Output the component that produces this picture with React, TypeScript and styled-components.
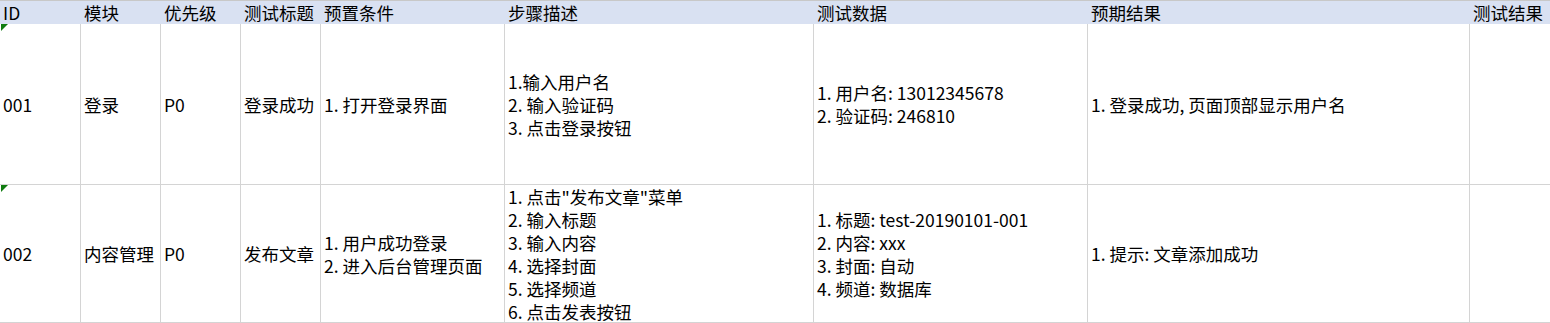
import React from 'react';
import styled, { createGlobalStyle } from 'styled-components';

const GlobalStyle = createGlobalStyle`
  body {
    margin: 0;
    background: #ffffff;
    font-family: 'Noto Sans CJK SC', 'Noto Sans', sans-serif;
    color: #000;
  }
`;

const columns = [81, 80, 80, 80, 184, 309, 274, 382, 80];

const Sheet = styled.div`
  display: grid;
  grid-template-columns: ${columns.map((w) => `${w}px`).join(' ')};
  grid-template-rows: 23px 161px 138px;
  border-top: 1px solid #c8c8c8;
  width: 1550px;
  font-size: 17.5px;
  line-height: 23px;
`;

const HeaderCell = styled.div`
  background: #d9e1f2;
  padding: 0 3px;
  white-space: nowrap;
  overflow: hidden;
  display: flex;
  align-items: center;
`;

const Cell = styled.div<{ $last?: boolean; $flag?: boolean }>`
  position: relative;
  box-sizing: border-box;
  border-bottom: 1px solid #d4d4d4;
  border-right: ${(p) => (p.$last ? 'none' : '1px solid #d4d4d4')};
  padding: 0 3px;
  display: flex;
  flex-direction: column;
  justify-content: center;
  white-space: nowrap;
  overflow: hidden;

  ${(p) =>
    p.$flag &&
    `
    &::before {
      content: '';
      position: absolute;
      top: 0;
      left: 1px;
      width: 0;
      height: 0;
      border-top: 7px solid #107c10;
      border-right: 7px solid transparent;
    }
  `}
`;

const Line = styled.span`
  display: block;
`;

const headers = ['ID', '模块', '优先级', '测试标题', '预置条件', '步骤描述', '测试数据', '预期结果', '测试结果'];

const rows: string[][][] = [
  [
    ['001'],
    ['登录'],
    ['P0'],
    ['登录成功'],
    ['1. 打开登录界面'],
    ['1.输入用户名', '2. 输入验证码', '3. 点击登录按钮'],
    ['1. 用户名: 13012345678', '2. 验证码: 246810'],
    ['1. 登录成功, 页面顶部显示用户名'],
    [],
  ],
  [
    ['002'],
    ['内容管理'],
    ['P0'],
    ['发布文章'],
    ['1. 用户成功登录', '2. 进入后台管理页面'],
    ['1. 点击"发布文章"菜单', '2. 输入标题', '3. 输入内容', '4. 选择封面', '5. 选择频道', '6. 点击发表按钮'],
    ['1. 标题: test-20190101-001', '2. 内容: xxx', '3. 封面: 自动', '4. 频道: 数据库'],
    ['1. 提示: 文章添加成功'],
    [],
  ],
];

const App: React.FC = () => (
  <>
    <GlobalStyle />
    <Sheet>
      {headers.map((h) => (
        <HeaderCell key={h}>{h}</HeaderCell>
      ))}
      {rows.map((row, r) =>
        row.map((lines, c) => (
          <Cell key={`${r}-${c}`} $flag={c === 0} $last={c === row.length - 1}>
            {lines.map((l) => (
              <Line key={l}>{l}</Line>
            ))}
          </Cell>
        ))
      )}
    </Sheet>
  </>
);

export default App;
